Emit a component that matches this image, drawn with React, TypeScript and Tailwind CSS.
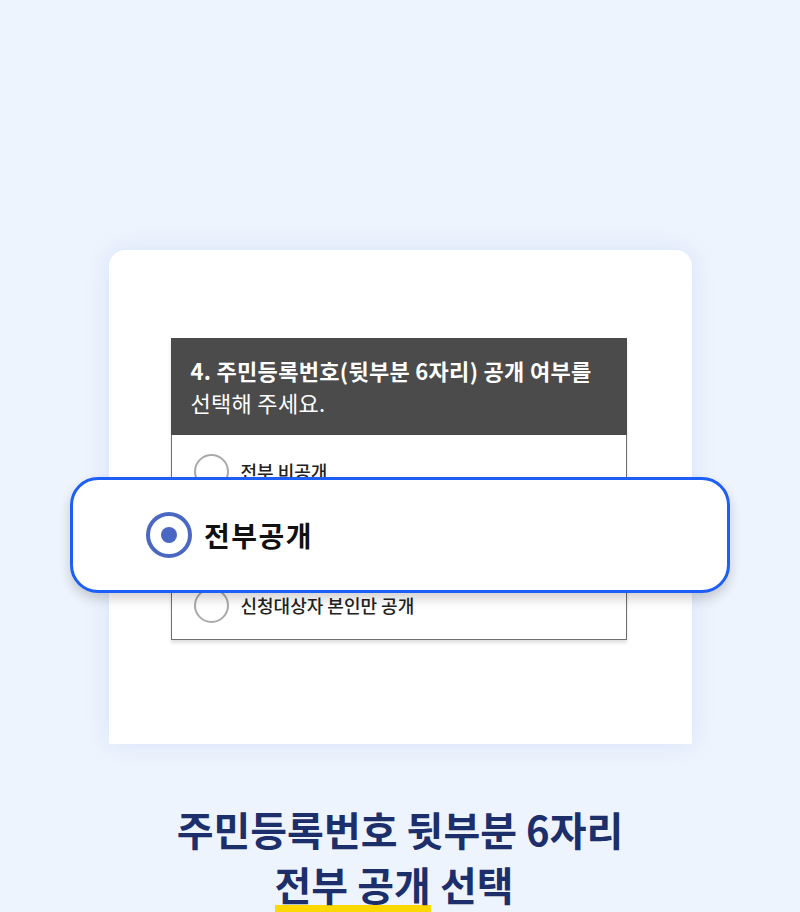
const font = "font-['Noto_Sans_CJK_KR','Noto_Sans',sans-serif]"

function Radio({ label, hidden }: { label: string; hidden?: boolean }) {
  return (
    <div className={`flex h-[36px] items-center pl-[22px] ${hidden ? 'invisible' : ''}`}>
      <span className="h-[35px] w-[35px] rounded-full border-[2.5px] border-[#a9a9a9] bg-white" />
      <span className="ml-[12px] text-[18px] font-medium text-[#222]">{label}</span>
    </div>
  )
}

export default function App() {
  return (
    <div className={`relative h-[912px] w-[800px] overflow-hidden bg-[#eef4fd] ${font}`}>
      <div className="flex justify-center pt-[250px]">
        <div className="h-[494px] w-[583px] rounded-t-[16px] bg-white pl-[62px] pt-[88px] shadow-[0_0_24px_rgba(170,195,240,0.35)]">
          <div className="w-[456px] shadow-[0_3px_3px_rgba(0,0,0,0.12)]">
            <div className="h-[97px] bg-[#4b4b4b] px-[20px] pt-[16px] text-[22px] leading-[32px] tracking-[0.3px] text-white">
              <p className="font-bold">4. 주민등록번호(뒷부분 6자리) 공개 여부를</p>
              <p>선택해 주세요.</p>
            </div>
            <div className="flex flex-col gap-[31px] border-x border-b border-[#6f6f6f] pb-[16px] pt-[18px]">
              <Radio label="전부 비공개" />
              <Radio label="전부공개" hidden />
              <Radio label="신청대상자 본인만 공개" />
            </div>
          </div>
        </div>
      </div>

      {/* 선택 강조 */}
      <div className="absolute left-[70px] top-[477px] flex h-[116px] w-[660px] items-center rounded-[28px] border-[3px] border-[#1c5ef6] bg-white pl-[73px] shadow-[0_6px_12px_rgba(0,0,0,0.18)]">
        <span className="flex h-[46px] w-[46px] items-center justify-center rounded-full border-[4px] border-[#4a68c2]">
          <span className="h-[16px] w-[16px] rounded-full bg-[#4a68c2]" />
        </span>
        <span className="ml-[12px] text-[28px] font-bold tracking-[1.5px] text-[#111]">전부공개</span>
      </div>

      <div className="pt-[58px] text-center text-[40px] font-bold leading-[55px] text-[#1c2f6b]">
        <p>주민등록번호 뒷부분 6자리</p>
        <p className="pr-[12px]">
          <span className="relative inline-block">
            <span className="absolute left-0 right-0 top-[48px] h-[10px] bg-[#ffd800]" />
            <span className="relative">전부 공개</span>
          </span>{' '}
          선택
        </p>
      </div>
    </div>
  )
}
